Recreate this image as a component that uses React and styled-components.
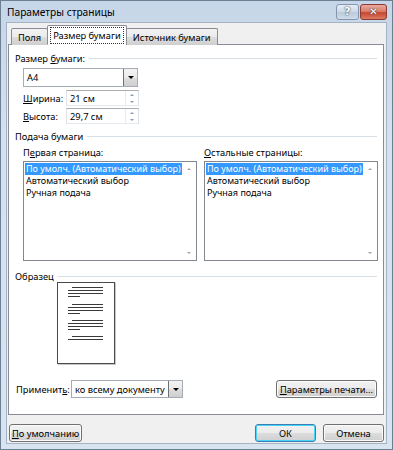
import styled, { createGlobalStyle } from "styled-components";

const GlobalStyle = createGlobalStyle`
  html, body { margin: 0; padding: 0; background: #fff; }
  body {
    font-family: "Noto Sans", "DejaVu Sans", sans-serif;
    font-size: 9.3px;
    color: #000;
  }
  u { text-decoration: underline; text-underline-offset: 1px; }
`;

const Window = styled.div`
  width: 393px;
  height: 450px;
  box-sizing: border-box;
  display: flex;
  flex-direction: column;
  background: linear-gradient(#c6d6e8, #d4e1ee 30%, #d8e4f0);
  border: 1px solid #6d7f92;
  padding: 0 5px 5px;
`;

const TitleBar = styled.div`
  height: 21px;
  display: flex;
  align-items: center;
  padding-left: 1px;
`;

const Title = styled.div`
  flex: 1;
  font-size: 10.2px;
  color: #000;
`;

const CaptionButton = styled.div`
  width: ${p => p.$w}px;
  height: 16px;
  margin-left: 1px;
  box-sizing: border-box;
  display: flex;
  align-items: center;
  justify-content: center;
  border: 1px solid ${p => (p.$close ? "#8c3b34" : "#8597ad")};
  border-radius: 3px;
  background: ${p =>
    p.$close
      ? "linear-gradient(#eaa99c, #d9806e 45%, #c8462f 55%, #dc7a62)"
      : "linear-gradient(#e6eef6, #cfdbe8 45%, #bccbdc 55%, #d0dcea)"};
  color: #fff;
  font-family: "DejaVu Sans", sans-serif;
  font-weight: bold;
  font-size: ${p => (p.$close ? 10 : 11)}px;
  text-shadow: 0 0 1px #3a4a5c, 0 0 2px #3a4a5c;
`;

const Client = styled.div`
  flex: 1;
  display: flex;
  flex-direction: column;
  background: #f0f0f0;
  border: 1px solid #a4b3c3;
  padding: 2px 0 0 1px;
`;

const TabStrip = styled.div`
  display: flex;
  align-items: flex-end;
  height: 20px;
  padding-left: 3px;
  position: relative;
  z-index: 1;
`;

const Tab = styled.div`
  height: ${p => (p.$active ? 20 : 17)}px;
  box-sizing: border-box;
  padding: 0 ${p => (p.$active ? 3 : 6)}px;
  margin: 0 ${p => (p.$active ? -1 : 0)}px;
  display: flex;
  align-items: center;
  border: 1px solid #898c95;
  border-bottom: ${p => (p.$active ? "1px solid #fff" : "none")};
  border-radius: 2px 2px 0 0;
  background: ${p => (p.$active ? "#fff" : "linear-gradient(#f2f2f2, #ebebeb 50%, #dddddd 50%, #cfcfcf)")};
  & + & { border-left: ${p => (p.$active ? "1px solid #898c95" : "none")}; }
`;

const FocusLabel = styled.span`
  outline: 1px dotted #333;
  outline-offset: 0;
  padding: 1px 2px;
`;

const Panel = styled.div`
  height: 371px;
  box-sizing: border-box;
  margin-top: -1px;
  margin-right: 2px;
  border: 1px solid #898c95;
  background: #fff;
  padding: 7px 6px 0 6px;
  display: flex;
  flex-direction: column;
`;

const GroupHeader = styled.div`
  display: flex;
  align-items: center;
  height: 12px;
  margin-top: ${p => p.$top || 0}px;
  &::after {
    content: "";
    flex: 1;
    height: 1px;
    margin-left: 4px;
    background: #d5dfe5;
  }
`;

const Indent = styled.div`
  padding-left: 8px;
  display: flex;
  flex-direction: column;
`;

const Combo = styled.div`
  width: ${p => p.$w}px;
  height: ${p => p.$h || 18}px;
  box-sizing: border-box;
  display: flex;
  border: 1px solid #a5acb5;
  background: #fff;
  margin-top: ${p => p.$top || 0}px;
`;

const ComboText = styled.div`
  flex: 1;
  display: flex;
  align-items: center;
  padding-left: 3px;
  white-space: nowrap;
`;

const DropButton = styled.div`
  width: 14px;
  box-sizing: border-box;
  display: flex;
  align-items: center;
  justify-content: center;
  border-left: 1px solid #707070;
  background: linear-gradient(#f2f2f2, #ebebeb 50%, #dddddd 50%, #cfcfcf);
  &::after {
    content: "";
    border-left: 3px solid transparent;
    border-right: 3px solid transparent;
    border-top: 3px solid #000;
  }
`;

const SpinRow = styled.div`
  display: flex;
  align-items: center;
  margin-top: ${p => p.$top}px;
`;

const SpinLabel = styled.div`
  width: 43px;
`;

const SpinBox = styled.div`
  width: 73px;
  height: 16px;
  box-sizing: border-box;
  display: flex;
  border: 1px solid #abadb3;
  border-color: #abadb3 #dbdfe6 #e3e9ef #e2e3ea;
  background: #fff;
`;

const SpinArrows = styled.div`
  width: 12px;
  display: flex;
  flex-direction: column;
  border-left: 1px solid #e6e9ee;
`;

const SpinArrow = styled.div`
  flex: 1;
  display: flex;
  align-items: center;
  justify-content: center;
  &::after {
    content: "";
    border-left: 2.5px solid transparent;
    border-right: 2.5px solid transparent;
    ${p => (p.$down ? "border-top" : "border-bottom")}: 2.5px solid #8a9bb5;
  }
`;

const Lists = styled.div`
  display: grid;
  grid-template-columns: 174px 174px;
  column-gap: 7px;
  margin-top: 5px;
`;

const ListColumn = styled.div`
  display: flex;
  flex-direction: column;
`;

const ListLabel = styled.div`
  height: 12px;
  line-height: 12px;
  margin-bottom: 2px;
`;

const ListBox = styled.div`
  height: 100px;
  box-sizing: border-box;
  display: flex;
  border: 1px solid #828790;
  background: #fff;
`;

const Items = styled.div`
  flex: 1;
  padding: 1px 0 0 1px;
  overflow: hidden;
`;

const Item = styled.div`
  height: 12px;
  line-height: 12px;
  font-size: 9px;
  white-space: nowrap;
  padding-left: 1px;
  background: ${p => (p.$sel ? "#3399ff" : "transparent")};
  color: ${p => (p.$sel ? "#fff" : "#000")};
`;

const ScrollCol = styled.div`
  width: 14px;
  display: flex;
  flex-direction: column;
  justify-content: space-between;
  align-items: center;
  padding: 6px 0;
`;

const ScrollArrow = styled.div`
  border-left: 2.5px solid transparent;
  border-right: 2.5px solid transparent;
  ${p => (p.$down ? "border-top" : "border-bottom")}: 2.5px solid #a3a3a3;
`;

const PageBox = styled.div`
  width: 58px;
  height: 82px;
  box-sizing: border-box;
  margin: 0 0 0 42px;
  border: 1px solid #4a4a4a;
  background: #fff;
  box-shadow: 1px 1px 0 #c8c8c8;
`;

const BottomRow = styled.div`
  display: flex;
  align-items: center;
  margin-top: 16px;
  padding-left: 1px;
`;

const ApplyLabel = styled.div`
  width: 55px;
`;

const Button = styled.div`
  width: ${p => p.$w}px;
  height: 18px;
  box-sizing: border-box;
  display: flex;
  align-items: center;
  justify-content: center;
  white-space: nowrap;
  border: 1px solid ${p => (p.$default ? "#3c7fb1" : "#707070")};
  border-radius: 3px;
  background: linear-gradient(#f2f2f2, #ebebeb 50%, #dddddd 50%, #cfcfcf);
  box-shadow: inset 0 0 0 1px ${p => (p.$default ? "#48d4fa" : "#fcfcfc")};
  margin-left: ${p => p.$ml || 0}px;
`;

const Spacer = styled.div`
  flex: 1;
`;

const Footer = styled.div`
  display: flex;
  align-items: center;
  margin-top: 9px;
  padding: 0 2px 0 1px;
`;

const lineGroups = [294, 311, 327, 343];

function PagePreview() {
  return (
    <PageBox>
      <svg width="56" height="80" viewBox="0 0 56 80">
        {lineGroups.map((y0, g) => {
          const top = y0 - 290;
          const rows = g === 3 ? 2 : 4;
          return Array.from({ length: rows }).map((_, i) => {
            const y = top + i * 3 + 0.5;
            const x1 = i === 0 ? 14 : 10;
            const x2 = i === 3 ? 22 : 45;
            return <line key={g + "-" + i} x1={x1} x2={x2} y1={y} y2={y} stroke="#3a3a3a" strokeWidth="1" />;
          });
        })}
      </svg>
    </PageBox>
  );
}

function ListPanel({ label }) {
  return (
    <ListColumn>
      <ListLabel>{label}</ListLabel>
      <ListBox>
        <Items>
          <Item $sel>По умолч. (Автоматический выбор)</Item>
          <Item>Автоматический выбор</Item>
          <Item>Ручная подача</Item>
        </Items>
        <ScrollCol>
          <ScrollArrow />
          <ScrollArrow $down />
        </ScrollCol>
      </ListBox>
    </ListColumn>
  );
}

function Spin({ label, value, top }) {
  return (
    <SpinRow $top={top}>
      <SpinLabel>{label}</SpinLabel>
      <SpinBox>
        <ComboText>{value}</ComboText>
        <SpinArrows>
          <SpinArrow />
          <SpinArrow $down />
        </SpinArrows>
      </SpinBox>
    </SpinRow>
  );
}

export default function App() {
  return (
    <>
      <GlobalStyle />
      <Window>
        <TitleBar>
          <Title>Параметры страницы</Title>
          <CaptionButton $w={23}>?</CaptionButton>
          <CaptionButton $w={27} $close>✕</CaptionButton>
        </TitleBar>
        <Client>
          <TabStrip>
            <Tab>Поля</Tab>
            <Tab $active><FocusLabel>Размер бумаги</FocusLabel></Tab>
            <Tab>Источник бумаги</Tab>
          </TabStrip>
          <Panel>
            <GroupHeader><span>Размер <u>б</u>умаги:</span></GroupHeader>
            <Indent>
              <Combo $w={115} $h={19} $top={4}>
                <ComboText>A4</ComboText>
                <DropButton />
              </Combo>
              <Spin label={<><u>Ш</u>ирина:</>} value="21 см" top={3} />
              <Spin label={<><u>В</u>ысота:</>} value="29,7 см" top={2} />
            </Indent>
            <GroupHeader $top={6}><span>Подача бумаги</span></GroupHeader>
            <Indent>
              <Lists>
                <ListPanel label={<>П<u>е</u>рвая страница:</>} />
                <ListPanel label={<><u>О</u>стальные страницы:</>} />
              </Lists>
            </Indent>
            <GroupHeader $top={9}><span>Образец</span></GroupHeader>
            <PagePreview />
            <BottomRow>
              <ApplyLabel>Применит<u>ь</u>:</ApplyLabel>
              <Combo $w={112}>
                <ComboText>ко всему документу</ComboText>
                <DropButton />
              </Combo>
              <Spacer />
              <Button $w={101}><u>П</u>араметры печати...</Button>
            </BottomRow>
          </Panel>
          <Footer>
            <Button $w={73}><u>П</u>о умолчанию</Button>
            <Spacer />
            <Button $w={61} $default>ОК</Button>
            <Button $w={61} $ml={7}>Отмена</Button>
          </Footer>
        </Client>
      </Window>
    </>
  );
}
